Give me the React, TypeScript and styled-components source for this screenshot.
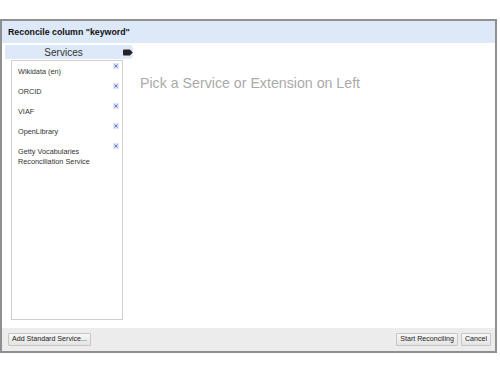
import styled, { createGlobalStyle } from "styled-components";

const GlobalStyle = createGlobalStyle`
	html, body {
		margin: 0;
		padding: 0;
		background: #ffffff;
	}
	body {
		font-family: "Liberation Sans", Arial, sans-serif;
	}
`;

const Page = styled.div`
	width: 500px;
	height: 375px;
	padding-top: 19px;
	box-sizing: border-box;
`;

const Dialog = styled.div`
	width: 497px;
	height: 334px;
	box-sizing: border-box;
	border: 2px solid #8f8f8f;
	display: flex;
	flex-direction: column;
	background: #ffffff;
`;

const TitleBar = styled.div`
	height: 22px;
	flex-shrink: 0;
	background: #dde8f9;
	display: flex;
	align-items: center;
	padding-left: 6px;
	font-size: 8.8px;
	font-weight: bold;
	color: #111;
`;

const Body = styled.div`
	flex: 1;
	display: flex;
	min-height: 0;
`;

const LeftPanel = styled.div`
	width: 131px;
	flex-shrink: 0;
	padding: 2px 0 0 3px;
	box-sizing: border-box;
	display: flex;
	flex-direction: column;
`;

const PanelHeader = styled.div`
	height: 14px;
	display: flex;
	align-items: center;
	background: #dde8f9;
	border-radius: 0 4px 4px 0;
`;

const HeaderLabel = styled.div`
	width: 118px;
	text-align: center;
	font-size: 10px;
	color: #333;
`;

const TagIcon = styled.svg`
	width: 10px;
	height: 7px;
	margin-left: 1px;
`;

const ServiceList = styled.div`
	margin: 1px 0 0 6px;
	width: 112px;
	height: 260px;
	box-sizing: border-box;
	border: 1px solid #cfcfcf;
`;

const ServiceItem = styled.div`
	display: flex;
	justify-content: space-between;
	align-items: flex-start;
	padding: 2px 3px 4px 6px;
`;

const ServiceName = styled.div<{ $wrap?: boolean }>`
	margin-top: 4px;
	font-size: 7.3px;
	line-height: 10px;
	color: #333;
	width: ${(p) => (p.$wrap ? "80px" : "auto")};
`;

const RemoveIcon = styled.svg`
	width: 6px;
	height: 6px;
	flex-shrink: 0;
`;

const RightPanel = styled.div`
	flex: 1;
	padding: 32px 0 0 7px;
	font-size: 14.2px;
	color: #aaaaaa;
`;

const Footer = styled.div`
	height: 23px;
	flex-shrink: 0;
	background: #ececec;
	display: flex;
	align-items: center;
	justify-content: space-between;
	padding: 0 4px 0 6px;
`;

const ButtonGroup = styled.div`
	display: flex;
	gap: 3px;
`;

const Button = styled.button`
	height: 13px;
	padding: 0 3px;
	font-family: "Liberation Sans", Arial, sans-serif;
	font-size: 7.1px;
	color: #222;
	background: linear-gradient(#f8f8f8, #e4e4e4);
	border: 1px solid #c6c6c6;
	border-radius: 1px;
	line-height: 11px;
`;

const services = [
	"Wikidata (en)",
	"ORCID",
	"VIAF",
	"OpenLibrary",
	"Getty Vocabularies Reconciliation Service",
];

function App() {
	return (
		<Page>
			<GlobalStyle />
			<Dialog>
				<TitleBar>Reconcile column "keyword"</TitleBar>
				<Body>
					<LeftPanel>
						<PanelHeader>
							<HeaderLabel>Services</HeaderLabel>
							<TagIcon viewBox="0 0 10 7">
								<path d="M1 0.5 H7 L9.8 3.5 L7 6.5 H1 Q0 6.5 0 5.5 V1.5 Q0 0.5 1 0.5 Z" fill="#222" />
							</TagIcon>
						</PanelHeader>
						<ServiceList>
							{services.map((name) => (
								<ServiceItem key={name}>
									<ServiceName $wrap={name.length > 20}>{name}</ServiceName>
									<RemoveIcon viewBox="0 0 6 6">
										<rect width="6" height="6" fill="#dfe5f7" />
										<path d="M1.5 1.5 L4.5 4.5 M4.5 1.5 L1.5 4.5" stroke="#5d7bd4" strokeWidth="1" />
									</RemoveIcon>
								</ServiceItem>
							))}
						</ServiceList>
					</LeftPanel>
					<RightPanel>Pick a Service or Extension on Left</RightPanel>
				</Body>
				<Footer>
					<Button>Add Standard Service...</Button>
					<ButtonGroup>
						<Button>Start Reconciling</Button>
						<Button>Cancel</Button>
					</ButtonGroup>
				</Footer>
			</Dialog>
		</Page>
	);
}

export default App;
